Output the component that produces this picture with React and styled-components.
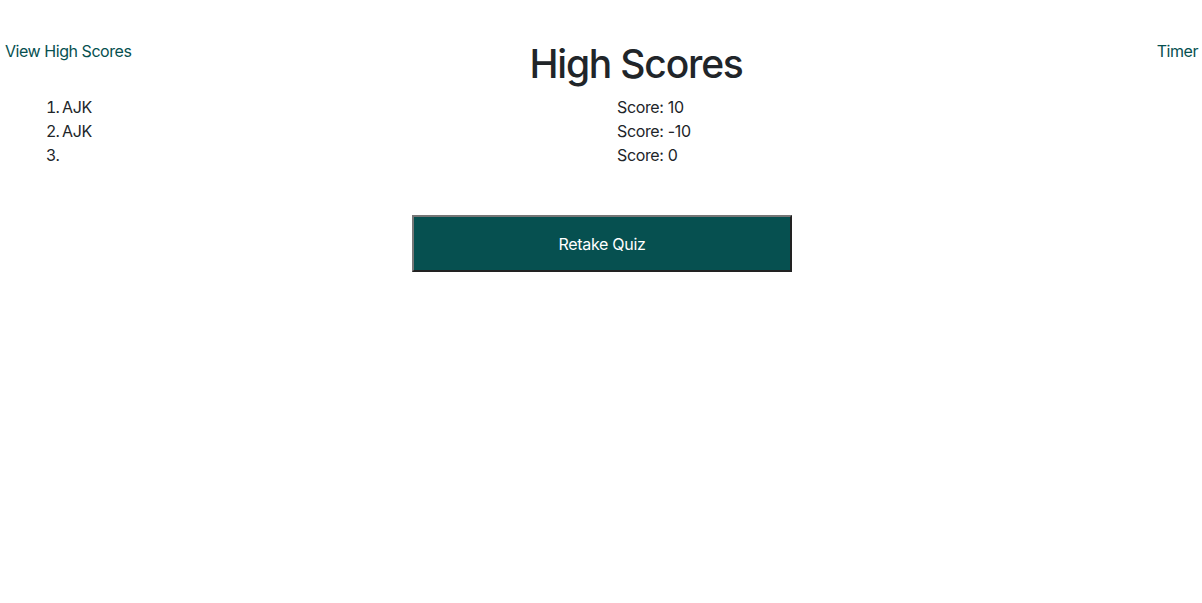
import React from 'react';
import styled, { createGlobalStyle } from 'styled-components';

const GlobalStyle = createGlobalStyle`
    html, body {
        margin: 0;
        padding: 0;
        background: #fff;
    }
    body {
        font-family: Inter, "Noto Sans", "Liberation Sans", sans-serif;
        font-size: 16px;
        line-height: 24px;
        letter-spacing: -0.35px;
        color: #212529;
    }
`;

const Page = styled.div`
    display: flex;
    flex-direction: column;
    padding-top: 39px;
`;

const Header = styled.header`
    display: flex;
    justify-content: space-between;
    align-items: flex-start;
    padding: 0 4px 0 5px;
`;

const NavLink = styled.a`
    color: #065050;
    text-decoration: none;
    font-size: 16px;
    line-height: 24px;
    letter-spacing: -0.45px;
    cursor: pointer;
`;

const Title = styled.h1`
    margin: 1px 0 7px;
    font-size: 39px;
    line-height: 48px;
    font-weight: 500;
    letter-spacing: -1.2px;
    color: #212529;
    transform: translateX(-8px);
`;

const Board = styled.div`
    display: grid;
    grid-template-columns: 1fr 1fr;
`;

const Names = styled.ol`
    margin: 0;
    padding: 0 0 0 62px;

    & li::marker {
        letter-spacing: -1px;
    }
`;

const Scores = styled.ul`
    list-style: none;
    margin: 0;
    padding: 0 0 0 16px;
`;

const Row = styled.li`
    line-height: 24px;
`;

const ButtonWrap = styled.div`
    display: flex;
    justify-content: center;
    margin-top: 48px;
    padding-left: 2px;
`;

const RetakeButton = styled.button`
    width: 380px;
    height: 57px;
    background: #065050;
    color: #fff;
    font-family: inherit;
    font-size: 16px;
    font-weight: 400;
    letter-spacing: -0.3px;
    border-width: 2px;
    border-style: solid;
    border-color: #767676 #222 #222 #767676;
    cursor: pointer;
`;

const entries = [
    { name: 'AJK', score: 10 },
    { name: 'AJK', score: -10 },
    { name: '', score: 0 },
];

const App = () => {
    return (
        <Page>
            <GlobalStyle />
            <Header>
                <NavLink>View High Scores</NavLink>
                <Title>High Scores</Title>
                <NavLink>Timer</NavLink>
            </Header>
            <Board>
                <Names>
                    {entries.map((e, i) => (
                        <Row key={i}>{e.name}</Row>
                    ))}
                </Names>
                <Scores>
                    {entries.map((e, i) => (
                        <Row key={i}>Score: {e.score}</Row>
                    ))}
                </Scores>
            </Board>
            <ButtonWrap>
                <RetakeButton>Retake Quiz</RetakeButton>
            </ButtonWrap>
        </Page>
    );
};

export default App;
